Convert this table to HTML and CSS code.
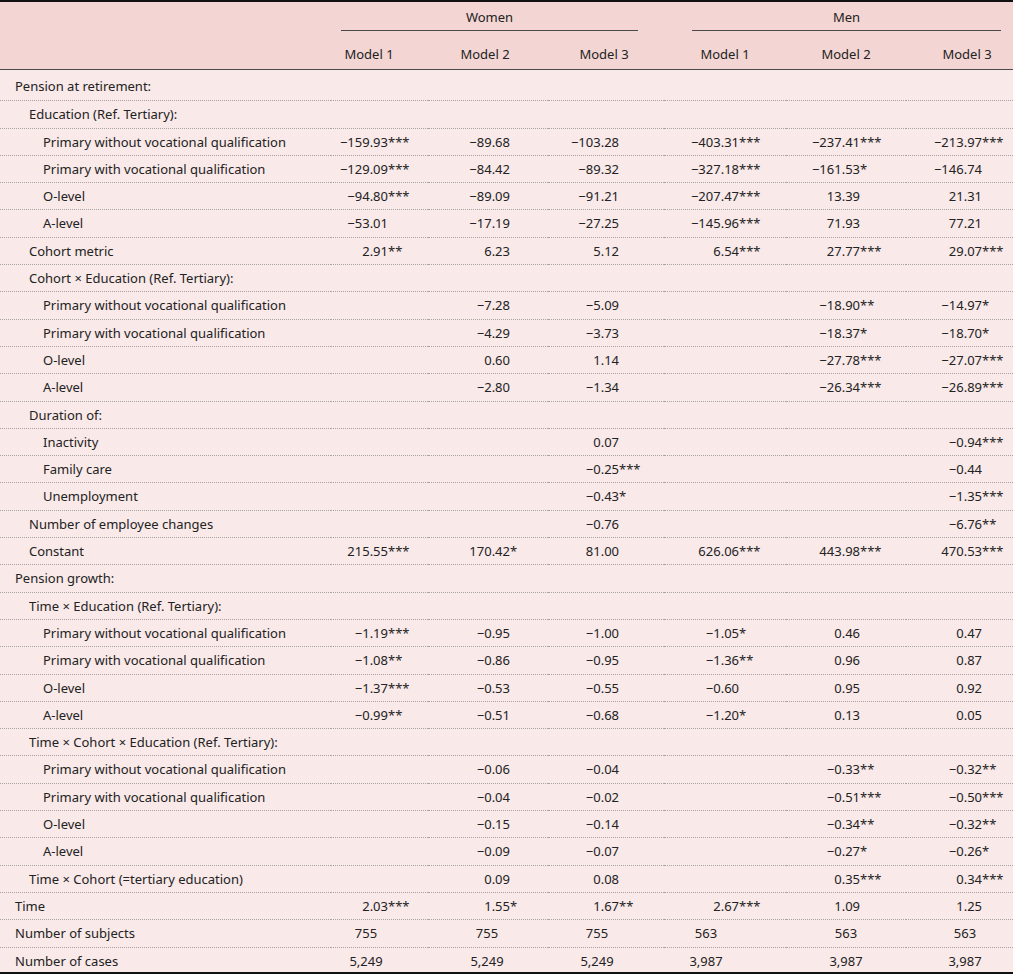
FILE: index.html
```html
<!DOCTYPE html>
<html lang="en">
<head>
<meta charset="utf-8">
<title>Pension regression table</title>
<link rel="stylesheet" href="styles.css">
</head>
<body>
<table class="tbl">
<colgroup>
<col class="c-label"><col class="c-w1"><col class="c-w2"><col class="c-w3"><col class="c-m1"><col class="c-m2"><col class="c-m3">
</colgroup>
<thead>
<tr class="h1">
<th></th>
<th colspan="3" class="grp"><div class="grp-in women">Women</div></th>
<th colspan="3" class="grp"><div class="grp-in men">Men</div></th>
</tr>
<tr class="h2">
<th></th>
<th class="mh mh1">Model 1</th><th class="mh mh2">Model 2</th><th class="mh mh3">Model 3</th>
<th class="mh mh4">Model 1</th><th class="mh mh5">Model 2</th><th class="mh mh6">Model 3</th>
</tr>
</thead>
<tbody>
<tr class="first"><td class="l0">Pension at retirement:</td><td></td><td></td><td></td><td></td><td></td><td></td></tr>
<tr><td class="l1">Education (Ref. Tertiary):</td><td></td><td></td><td></td><td></td><td></td><td></td></tr>
<tr><td class="l2">Primary without vocational qualification</td><td>−159.93<span class="s">***</span></td><td>−89.68</td><td>−103.28</td><td>−403.31<span class="s">***</span></td><td>−237.41<span class="s">***</span></td><td>−213.97<span class="s">***</span></td></tr>
<tr><td class="l2">Primary with vocational qualification</td><td>−129.09<span class="s">***</span></td><td>−84.42</td><td>−89.32</td><td>−327.18<span class="s">***</span></td><td>−161.53<span class="s">*</span></td><td>−146.74</td></tr>
<tr><td class="l2">O-level</td><td>−94.80<span class="s">***</span></td><td>−89.09</td><td>−91.21</td><td>−207.47<span class="s">***</span></td><td>13.39</td><td>21.31</td></tr>
<tr><td class="l2">A-level</td><td>−53.01</td><td>−17.19</td><td>−27.25</td><td>−145.96<span class="s">***</span></td><td>71.93</td><td>77.21</td></tr>
<tr><td class="l1">Cohort metric</td><td>2.91<span class="s">**</span></td><td>6.23</td><td>5.12</td><td>6.54<span class="s">***</span></td><td>27.77<span class="s">***</span></td><td>29.07<span class="s">***</span></td></tr>
<tr><td class="l1">Cohort × Education (Ref. Tertiary):</td><td></td><td></td><td></td><td></td><td></td><td></td></tr>
<tr><td class="l2">Primary without vocational qualification</td><td></td><td>−7.28</td><td>−5.09</td><td></td><td>−18.90<span class="s">**</span></td><td>−14.97<span class="s">*</span></td></tr>
<tr><td class="l2">Primary with vocational qualification</td><td></td><td>−4.29</td><td>−3.73</td><td></td><td>−18.37<span class="s">*</span></td><td>−18.70<span class="s">*</span></td></tr>
<tr><td class="l2">O-level</td><td></td><td>0.60</td><td>1.14</td><td></td><td>−27.78<span class="s">***</span></td><td>−27.07<span class="s">***</span></td></tr>
<tr><td class="l2">A-level</td><td></td><td>−2.80</td><td>−1.34</td><td></td><td>−26.34<span class="s">***</span></td><td>−26.89<span class="s">***</span></td></tr>
<tr><td class="l1">Duration of:</td><td></td><td></td><td></td><td></td><td></td><td></td></tr>
<tr><td class="l2">Inactivity</td><td></td><td></td><td>0.07</td><td></td><td></td><td>−0.94<span class="s">***</span></td></tr>
<tr><td class="l2">Family care</td><td></td><td></td><td>−0.25<span class="s">***</span></td><td></td><td></td><td>−0.44</td></tr>
<tr><td class="l2">Unemployment</td><td></td><td></td><td>−0.43<span class="s">*</span></td><td></td><td></td><td>−1.35<span class="s">***</span></td></tr>
<tr><td class="l1">Number of employee changes</td><td></td><td></td><td>−0.76</td><td></td><td></td><td>−6.76<span class="s">**</span></td></tr>
<tr><td class="l1">Constant</td><td>215.55<span class="s">***</span></td><td>170.42<span class="s">*</span></td><td>81.00</td><td>626.06<span class="s">***</span></td><td>443.98<span class="s">***</span></td><td>470.53<span class="s">***</span></td></tr>
<tr><td class="l0">Pension growth:</td><td></td><td></td><td></td><td></td><td></td><td></td></tr>
<tr><td class="l1">Time × Education (Ref. Tertiary):</td><td></td><td></td><td></td><td></td><td></td><td></td></tr>
<tr><td class="l2">Primary without vocational qualification</td><td>−1.19<span class="s">***</span></td><td>−0.95</td><td>−1.00</td><td>−1.05<span class="s">*</span></td><td>0.46</td><td>0.47</td></tr>
<tr><td class="l2">Primary with vocational qualification</td><td>−1.08<span class="s">**</span></td><td>−0.86</td><td>−0.95</td><td>−1.36<span class="s">**</span></td><td>0.96</td><td>0.87</td></tr>
<tr><td class="l2">O-level</td><td>−1.37<span class="s">***</span></td><td>−0.53</td><td>−0.55</td><td>−0.60</td><td>0.95</td><td>0.92</td></tr>
<tr><td class="l2">A-level</td><td>−0.99<span class="s">**</span></td><td>−0.51</td><td>−0.68</td><td>−1.20<span class="s">*</span></td><td>0.13</td><td>0.05</td></tr>
<tr><td class="l1">Time × Cohort × Education (Ref. Tertiary):</td><td></td><td></td><td></td><td></td><td></td><td></td></tr>
<tr><td class="l2">Primary without vocational qualification</td><td></td><td>−0.06</td><td>−0.04</td><td></td><td>−0.33<span class="s">**</span></td><td>−0.32<span class="s">**</span></td></tr>
<tr><td class="l2">Primary with vocational qualification</td><td></td><td>−0.04</td><td>−0.02</td><td></td><td>−0.51<span class="s">***</span></td><td>−0.50<span class="s">***</span></td></tr>
<tr><td class="l2">O-level</td><td></td><td>−0.15</td><td>−0.14</td><td></td><td>−0.34<span class="s">**</span></td><td>−0.32<span class="s">**</span></td></tr>
<tr><td class="l2">A-level</td><td></td><td>−0.09</td><td>−0.07</td><td></td><td>−0.27<span class="s">*</span></td><td>−0.26<span class="s">*</span></td></tr>
<tr><td class="l1">Time × Cohort (=tertiary education)</td><td></td><td>0.09</td><td>0.08</td><td></td><td>0.35<span class="s">***</span></td><td>0.34<span class="s">***</span></td></tr>
<tr><td class="l0">Time</td><td>2.03<span class="s">***</span></td><td>1.55<span class="s">*</span></td><td>1.67<span class="s">**</span></td><td>2.67<span class="s">***</span></td><td>1.09</td><td>1.25</td></tr>
<tr class="counts"><td class="l0">Number of subjects</td><td>755</td><td>755</td><td>755</td><td>563</td><td>563</td><td>563</td></tr>
<tr class="counts last"><td class="l0">Number of cases</td><td>5,249</td><td>5,249</td><td>5,249</td><td>3,987</td><td>3,987</td><td>3,987</td></tr>
</tbody>
</table>
</body>
</html>
```

FILE: styles.css
```css
html, body {
  margin: 0;
  padding: 0;
  background: #ffffff;
}

.tbl {
  width: 1013px;
  table-layout: fixed;
  border-collapse: collapse;
  font-family: "Noto Sans", "Open Sans", sans-serif;
  font-size: 13px;
  line-height: 16.3px;
  color: #222222;
  border-top: 2px solid #111111;
  border-bottom: 2px solid #111111;
}

.c-label { width: 331px; }
.c-w1 { width: 97px; }
.c-w2 { width: 120px; }
.c-w3 { width: 116px; }
.c-m1 { width: 122px; }
.c-m2 { width: 120px; }
.c-m3 { width: 107px; }

thead th {
  background: #f3d5d3;
  font-weight: normal;
  padding: 0;
  line-height: 16px;
}

.h1 th {
  vertical-align: bottom;
}

.grp-in {
  text-align: center;
  padding: 7px 0 5px;
  border-bottom: 1px solid #4a4a4a;
}

.women { margin: 0 26px 0 10px; }
.men { margin: 0 12px 0 28px; }

.h2 th {
  padding: 15px 0 7px;
  border-bottom: 1px solid #4a4a4a;
  text-align: center;
  white-space: nowrap;
}

.h2 .mh1 { padding-right: 21px; }
.h2 .mh2 { padding-right: 6px; }
.h2 .mh3 { padding-right: 4px; }
.h2 .mh6 { padding-left: 15px; }

tbody td {
  background: #f9e9e9;
  padding: 5px 0;
  border-bottom: 1px dotted #a9a2a2;
  text-align: right;
  white-space: nowrap;
}

tbody tr.first td { padding-top: 8px; padding-bottom: 6px; }
tbody tr.last td { padding-bottom: 3px; border-bottom: 2px solid #111111; }

tbody td:nth-child(2) { padding-right: 40px; }
tbody td:nth-child(3) { padding-right: 38px; }
tbody td:nth-child(4) { padding-right: 45px; }
tbody td:nth-child(5) { padding-right: 47px; }
tbody td:nth-child(6) { padding-right: 46px; }
tbody td:nth-child(7) { padding-right: 31px; }

tbody td.l0, tbody td.l1, tbody td.l2 { text-align: left; }
tbody td.l0 { padding-left: 15px; }
tbody td.l1 { padding-left: 29px; }
tbody td.l2 { padding-left: 43px; }

/* sample-size rows: values centred in each column */
tbody tr.counts td { text-align: center; }
tbody tr.counts td.l0 { text-align: left; }
tbody tr.counts td:nth-child(2) { padding-right: 27px; }
tbody tr.counts td:nth-child(3) { padding-right: 2px; }
tbody tr.counts td:nth-child(4) { padding-right: 18px; }
tbody tr.counts td:nth-child(5) { padding-right: 38px; }
tbody tr.counts td:nth-child(6) { padding-right: 0; }
tbody tr.counts td:nth-child(7) { padding-right: 0; padding-left: 11px; }

.s {
  display: inline-block;
  width: 0;
  text-align: left;
  white-space: nowrap;
}
```
